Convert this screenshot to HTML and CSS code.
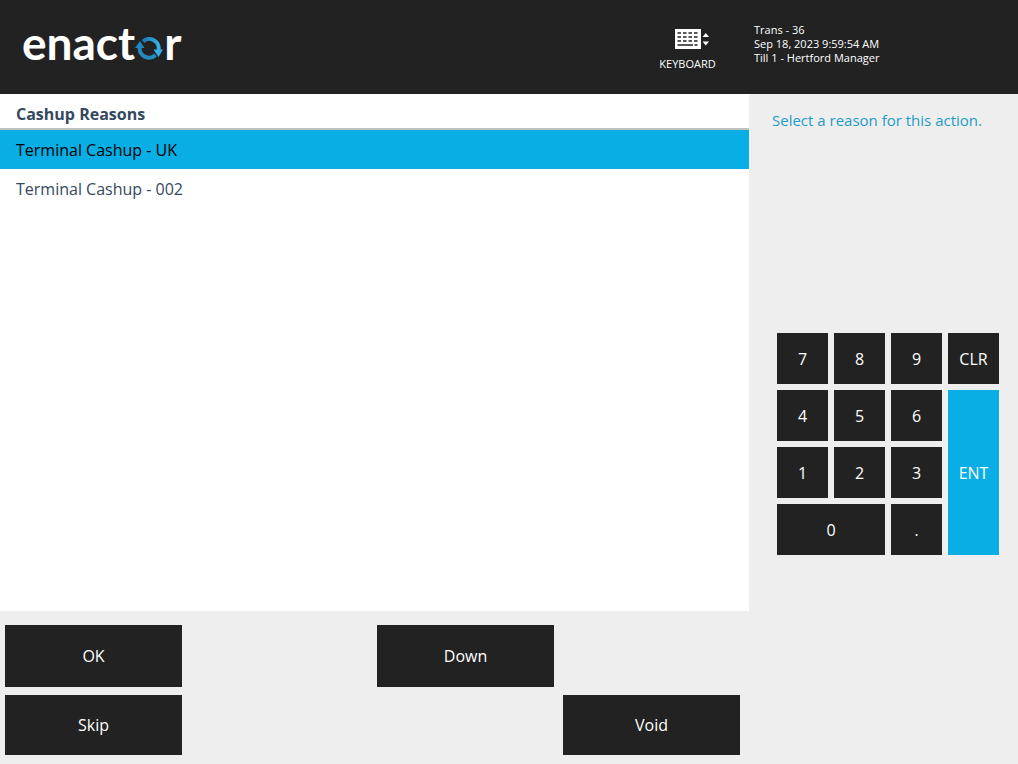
FILE: index.html
```html
<!DOCTYPE html>
<html lang="en">
<head>
  <meta charset="UTF-8">
  <meta name="viewport" content="width=device-width, initial-scale=1">
  <title>Enactor POS - Cashup Reasons</title>
  <link rel="stylesheet" href="styles.css">
</head>
<body>
  <header class="topbar">
    <div class="logo">
      <span>enact</span>
      <svg class="logo-ring" width="28" height="23" viewBox="0 0 28 23" aria-hidden="true">
        <defs>
          <linearGradient id="ring" x1="0" y1="0" x2="1" y2="0">
            <stop offset="0" stop-color="#1a78ad"/>
            <stop offset="1" stop-color="#35b0e6"/>
          </linearGradient>
        </defs>
        <path d="M8 4.500 A9.300 9.300 0 0 1 23.500 13" fill="none" stroke="url(#ring)" stroke-width="4"/>
        <path d="M20.500 18 A9.300 9.300 0 0 1 4.800 10" fill="none" stroke="#2389bf" stroke-width="4"/>
        <path d="M18.500 12.500 H28 L23.500 20 Z" fill="#35b0e6"/>
        <path d="M0 11 L5 4 L9.500 11 Z" fill="#2085bb"/>
      </svg>
      <span>r</span>
      <i class="logo-mark"></i>
    </div>
    <button type="button" class="keyboard">
      <svg width="34" height="20" viewBox="0 0 34 20" aria-hidden="true">
        <path fill="#fff" d="M0 0h26v20H0z"/>
        <path stroke="#222" stroke-width="1.600" d="M2.500 4h3.500m2 0h3.500m2 0h3.500m2 0h3.500M2.500 8h3.500m2 0h3.500m2 0h3.500m2 0h3.500M2.500 12h3.500m2 0h3.500m2 0h3.500m2 0h3.500M2.500 16h15.500m1.500 0h3"/>
        <path fill="#fff" d="M27.500 8l3.300-4 3.200 4zM27.500 12.500h6.500l-3.200 4z"/>
      </svg>
      <span>KEYBOARD</span>
    </button>
    <div class="status">
      <div>Trans - 36</div>
      <div>Sep 18, 2023 9:59:54 AM</div>
      <div>Till 1 - Hertford Manager</div>
    </div>
  </header>

  <div class="screen">
    <main class="main">
      <section class="reasons">
        <h1>Cashup Reasons</h1>
        <ul>
          <li><button type="button" class="reason selected" aria-pressed="true">Terminal Cashup - UK</button></li>
          <li><button type="button" class="reason" aria-pressed="false">Terminal Cashup - 002</button></li>
        </ul>
      </section>
      <div class="actions">
        <button type="button" class="ok">OK</button>
        <button type="button" class="down">Down</button>
        <button type="button" class="skip">Skip</button>
        <button type="button" class="void">Void</button>
      </div>
    </main>

    <aside class="side">
      <p class="prompt">Select a reason for this action.</p>
      <div class="keypad">
        <button type="button">7</button>
        <button type="button">8</button>
        <button type="button">9</button>
        <button type="button">CLR</button>
        <button type="button">4</button>
        <button type="button">5</button>
        <button type="button">6</button>
        <button type="button" class="enter">ENT</button>
        <button type="button">1</button>
        <button type="button">2</button>
        <button type="button">3</button>
        <button type="button" class="zero">0</button>
        <button type="button">.</button>
      </div>
    </aside>
  </div>
</body>
</html>
```
FILE: styles.css
```css
* {
  box-sizing: border-box;
}
body {
  margin: 0;
  min-height: 100vh;
  display: flex;
  flex-direction: column;
  background: #eeeeee;
  font-family: "Open Sans", "Noto Sans", sans-serif;
  font-size: 16px;
}
button {
  border: none;
  padding: 0;
  font: inherit;
  color: #fff;
  background: #222222;
  cursor: pointer;
}

/* top bar */
.topbar {
  display: grid;
  grid-template-columns: 1fr 90px 269px;
  height: 94px;
  padding-left: 22px;
  background: #222222;
  color: #fff;
}
.logo {
  display: flex;
  align-items: baseline;
  align-self: start;
  padding-top: 18px;
  font-family: Lato, sans-serif;
  font-size: 46px;
  font-weight: bold;
  line-height: 50px;
}
.logo-ring {
  margin-right: 1px;
}
.logo-mark {
  width: 1px;
  height: 1px;
  align-self: center;
  margin-bottom: 12px;
  background: #999;
}
.keyboard {
  display: flex;
  flex-direction: column;
  align-items: center;
  gap: 7px;
  width: 57px;
  padding-top: 29px;
  font-size: 11px;
  line-height: 15px;
}
.keyboard svg {
  margin-left: 8px;
}
.status {
  padding: 23px 0 0 5px;
  font-size: 11px;
  line-height: 14px;
}

/* body of the screen */
.screen {
  flex: 1;
  display: grid;
  grid-template-columns: 1fr 269px;
}
.main {
  display: flex;
  flex-direction: column;
}
.reasons {
  flex: 1;
  background: #fff;
}
.reasons h1 {
  margin: 0;
  padding: 8px 16px 2px;
  border-bottom: 2px solid #bfbfbf;
  color: #34495e;
  font-size: 16px;
  line-height: 24px;
}
.reasons ul {
  list-style: none;
  margin: 0;
  padding: 0;
}
.reason {
  display: block;
  width: 100%;
  height: 39px;
  padding: 0 16px;
  text-align: left;
  color: #34495e;
  background: #fff;
}
.reason.selected {
  color: #000;
  background: #09aee4;
}
.actions {
  display: grid;
  grid-template-columns: repeat(4, 1fr);
  grid-template-rows: 62px 60px;
  gap: 8px 9px;
  padding: 14px 9px 9px 5px;
}
.skip {
  grid-area: 2 / 1;
}
.down {
  grid-area: 1 / 3;
}
.void {
  grid-area: 2 / 4;
}

/* prompt and keypad */
.side {
  padding: 16px 19px 0 23px;
}
.prompt {
  margin: 0 0 203px;
  color: #1f9bc9;
  font-size: 15px;
  line-height: 20px;
}
.keypad {
  display: grid;
  grid-template-columns: repeat(4, 51px);
  grid-auto-rows: 51px;
  gap: 6px;
  justify-content: end;
}
.enter {
  grid-row: 2 / span 3;
  grid-column: 4;
  background: #09aee4;
}
.zero {
  grid-column: span 2;
}
```
